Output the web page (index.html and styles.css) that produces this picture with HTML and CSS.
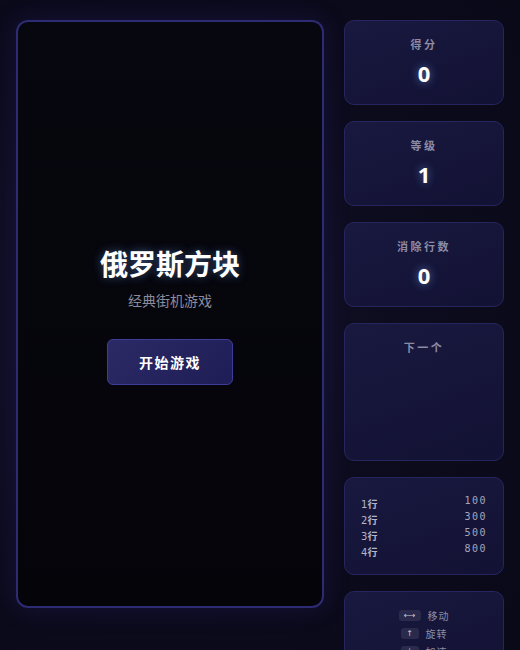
FILE: index.html
```html
<!DOCTYPE html>
<html lang="zh-CN">
<head>
    <meta charset="UTF-8">
    <meta name="viewport" content="width=device-width, initial-scale=1.0">
    <title>俄罗斯方块</title>
    <link rel="stylesheet" href="styles.css">
</head>
<body>
    <div class="game">
        <div class="board">
            <div class="overlay">
                <h1 class="title">俄罗斯方块</h1>
                <p class="subtitle">经典街机游戏</p>
                <button class="start-btn">开始游戏</button>
            </div>
        </div>

        <div class="side">
            <div class="card">
                <div class="card-label">得分</div>
                <div class="card-value">0</div>
            </div>
            <div class="card">
                <div class="card-label">等级</div>
                <div class="card-value">1</div>
            </div>
            <div class="card">
                <div class="card-label">消除行数</div>
                <div class="card-value">0</div>
            </div>
            <div class="card next">
                <div class="card-label">下一个</div>
                <div class="next-preview"></div>
            </div>
            <div class="card points">
                <div class="points-row"><span class="lines">1<b>行</b></span><span class="pts">100</span></div>
                <div class="points-row"><span class="lines">2<b>行</b></span><span class="pts">300</span></div>
                <div class="points-row"><span class="lines">3<b>行</b></span><span class="pts">500</span></div>
                <div class="points-row"><span class="lines">4<b>行</b></span><span class="pts">800</span></div>
            </div>
            <div class="card controls">
                <div class="control-row"><span class="key wide">⟷</span><span class="action">移动</span></div>
                <div class="control-row"><span class="key">↑</span><span class="action">旋转</span></div>
                <div class="control-row"><span class="key">↓</span><span class="action">加速</span></div>
            </div>
        </div>
    </div>
</body>
</html>
```

FILE: styles.css
```css
* {
    margin: 0;
    padding: 0;
    box-sizing: border-box;
}

body {
    background: radial-gradient(ellipse at 30% 50%, #121129 0%, #0c0b1c 60%, #0a0918 100%);
    font-family: "Noto Sans", "Noto Sans CJK SC", sans-serif;
    color: #fff;
    height: 650px;
    overflow: hidden;
}

.game {
    display: flex;
    gap: 20px;
    padding: 20px 16px;
}

/* playfield */
.board {
    width: 308px;
    height: 588px;
    background: linear-gradient(180deg, #07070f 0%, #040409 100%);
    border: 2px solid #2e2b75;
    border-radius: 12px;
    box-shadow: 0 0 24px rgba(50, 44, 150, 0.25);
    display: flex;
    align-items: center;
    justify-content: center;
}

.overlay {
    display: flex;
    flex-direction: column;
    align-items: center;
    margin-top: 2px;
}

.title {
    font-size: 28px;
    font-weight: 700;
    line-height: 38px;
    text-shadow: 0 0 10px rgba(120, 170, 255, 0.45);
}

.subtitle {
    margin-top: 8px;
    font-size: 14px;
    line-height: 20px;
    color: #8b8b9c;
}

.start-btn {
    margin-top: 28px;
    width: 126px;
    height: 46px;
    background: linear-gradient(135deg, #2c2a66 0%, #1f1d55 100%);
    border: 1px solid #3f3c9c;
    border-radius: 6px;
    color: #fff;
    font-family: inherit;
    font-size: 14px;
    font-weight: 700;
    letter-spacing: 1.5px;
    cursor: pointer;
}

/* side panel */
.side {
    width: 160px;
    display: flex;
    flex-direction: column;
    gap: 16px;
}

.card {
    background: linear-gradient(160deg, #19183f 0%, #121234 100%);
    border: 1px solid #27255e;
    border-radius: 10px;
    padding: 16px;
    text-align: center;
}

.card-label {
    font-size: 11px;
    line-height: 16px;
    font-weight: 700;
    letter-spacing: 2.5px;
    color: #8c8ba6;
}

.card-value {
    margin-top: 6px;
    font-size: 22px;
    line-height: 29px;
    font-weight: 700;
    text-shadow: 0 0 8px rgba(130, 180, 255, 0.6);
}

.next-preview {
    height: 84px;
    margin-top: 4px;
}

/* score table */
.points-row {
    display: flex;
    justify-content: space-between;
    align-items: center;
    height: 16px;
}

.lines {
    font-size: 10px;
    color: #b4b4c8;
    font-family: "DejaVu Sans", "Noto Sans CJK SC", sans-serif;
    margin-top: 3px;
}

.lines b {
    font-weight: 600;
}

.pts {
    font-family: "DejaVu Sans Mono", monospace;
    font-size: 10px;
    letter-spacing: 1.5px;
    color: #a6a6bc;
    margin-top: -3px;
}

/* key hints */
.controls {
    padding: 14px 16px;
}

.control-row {
    display: flex;
    justify-content: center;
    align-items: center;
    gap: 7px;
    height: 18px;
}

.key {
    display: inline-block;
    min-width: 18px;
    padding: 0 3px;
    height: 11px;
    line-height: 11px;
    font-size: 8px;
    background: #2a2a4c;
    border-radius: 3px;
    color: #c8c8d8;
    font-family: "DejaVu Sans", sans-serif;
}

.key.wide {
    width: 22px;
}

.action {
    font-size: 10px;
    color: #8d8ca4;
    letter-spacing: 1px;
}
```
